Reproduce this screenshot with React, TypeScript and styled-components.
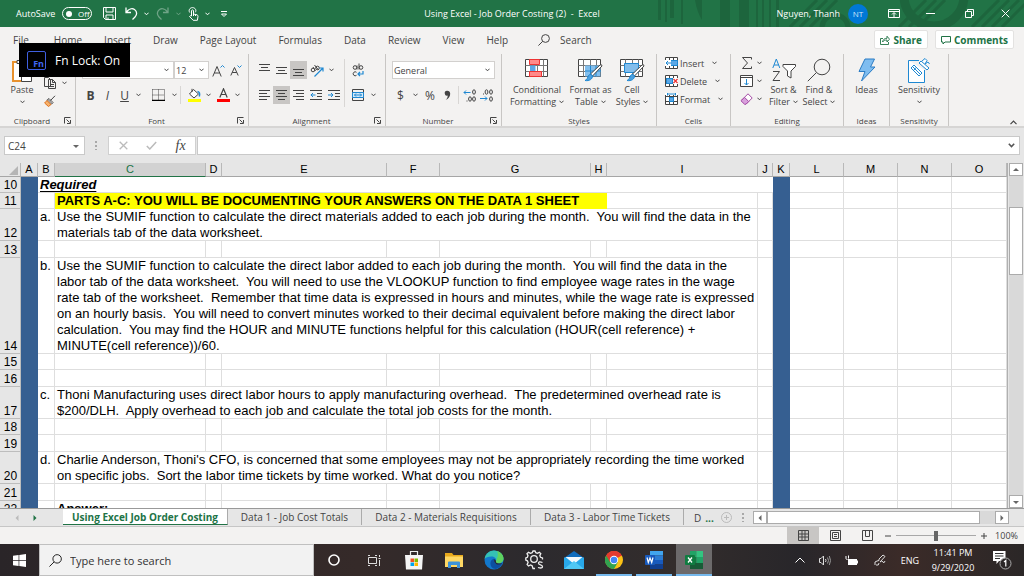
import React from 'react';
import styled, { createGlobalStyle, css } from 'styled-components';

const GREEN = '#217346';
const INK = '#444444';
const BLUE = '#1e88d2';

const Global = createGlobalStyle`
  * { box-sizing: border-box; }
  body { margin: 0; font-family: "Open Sans", "Noto Sans", sans-serif; font-size: 10px; color: ${INK}; }
  button, input, select { font: inherit; color: inherit; margin: 0; padding: 0; border: 0; background: none; border-radius: 0; }
  button { display: flex; align-items: center; justify-content: center; white-space: nowrap; }
  svg { display: block; flex: none; }
`;

const Shell = styled.div`
  display: flex;
  flex-direction: column;
  height: 100vh;
  overflow: hidden;
  background: #f3f2f1;
`;

/* ---------- shared pieces ---------- */

const Glyph = ({ w, h, box, children }: { w: number; h: number; box?: string; children: React.ReactNode }) => (
  <svg width={w} height={h} viewBox={box || `0 0 ${w} ${h}`} fill="none" stroke={INK} strokeWidth="1" aria-hidden="true">
    {children}
  </svg>
);

const Chevron = ({ color = INK }: { color?: string }) => (
  <svg width="5" height="4" viewBox="0 0 5 4" fill="none" stroke={color} aria-hidden="true">
    <path d="M.4.7 2.5 2.8 4.6.7" />
  </svg>
);

const Triangle = ({ dir, color = '#666' }: { dir: 'up' | 'down' | 'left' | 'right'; color?: string }) => {
  const d = { up: 'M1 5 4 2 7 5z', down: 'M1 3 4 6 7 3z', left: 'M5.500 1 2.500 4 5.500 7z', right: 'M2.500 1 5.500 4 2.500 7z' }[dir];
  return (
    <svg width="8" height="8" viewBox="0 0 8 8" fill={color} aria-hidden="true">
      <path d={d} />
    </svg>
  );
};

/* ---------- title bar ---------- */

const TitleBar = styled.header`
  position: relative;
  display: grid;
  grid-template-columns: 1fr auto 1fr;
  align-items: center;
  flex: none;
  height: 27px;
  background: ${GREEN};
  color: #fff;
`;
const Pattern = styled.svg`
  position: absolute;
  top: 0;
  right: 0;
`;
const TitleSide = styled.div<{ $end?: boolean }>`
  position: relative;
  display: flex;
  align-items: center;
  height: 27px;
  ${(p) => (p.$end ? 'justify-content: flex-end;' : 'padding-left: 16px;')}
`;
const Title = styled.h1`
  position: relative;
  margin: 0;
  font-size: 9px;
  font-weight: 400;
  white-space: pre;
`;
const AutoSave = styled.label`
  display: flex;
  align-items: center;
  gap: 3px;
  width: 81px;
  font-size: 9px;
`;
const Pill = styled.span`
  display: flex;
  align-items: center;
  gap: 6px;
  width: 30px;
  height: 13px;
  margin-left: auto;
  margin-right: 5px;
  padding-left: 3px;
  border: 1px solid #fff;
  border-radius: 7px;
  font-size: 8px;
  line-height: 8px;
`;
const Knob = styled.input`
  appearance: none;
  width: 6px;
  height: 6px;
  border-radius: 50%;
  background: #fff;
`;
const BarButton = styled.button<{ $w: number; $dim?: boolean }>`
  width: ${(p) => p.$w}px;
  height: 27px;
  opacity: ${(p) => (p.$dim ? 0.35 : 1)};
`;
const UserName = styled.span`
  margin-right: 8px;
  font-size: 9px;
`;
const Avatar = styled.span`
  display: grid;
  place-items: center;
  width: 20px;
  height: 20px;
  margin-right: 10px;
  border-radius: 50%;
  background: #0078d7;
  font-size: 8px;
  color: #cfe6fa;
`;

/* ---------- ribbon tabs ---------- */

const TabRow = styled.nav`
  display: flex;
  align-items: center;
  flex: none;
  height: 25px;
  padding: 0 10px 0 13px;
  gap: 22px;
`;
const RibbonTab = styled.button`
  height: 25px;
  font-size: 10px;
  &:first-child { margin-right: 3px; }
`;
const SearchBox = styled.label`
  display: flex;
  align-items: center;
  gap: 10px;
  margin: 0 auto 0 8px;
  input { width: 80px; }
  input::placeholder { color: ${INK}; opacity: 1; }
`;
const TabActions = styled.div`
  display: flex;
  gap: 7px;
`;
const ActionButton = styled.button`
  gap: 3px;
  height: 19px;
  padding: 0 5px;
  border: 1px solid #e3e2e1;
  border-radius: 2px;
  background: #fff;
  color: ${GREEN};
  font-size: 10px;
  font-weight: 700;
`;

/* ---------- ribbon ---------- */

const Ribbon = styled.section`
  display: flex;
  flex: none;
  height: 76px;
  padding-top: 2px;
  border-bottom: 2px solid #d6d5d4;
`;
const GroupBox = styled.div<{ $w: number }>`
  display: flex;
  flex-direction: column;
  flex: none;
  width: ${(p) => p.$w}px;
  height: 72px;
  border-right: 1px solid #c8c6c4;
`;
const GroupBody = styled.div`
  display: flex;
  flex: 1;
  min-height: 0;
`;
const GroupFoot = styled.div<{ $launch?: boolean }>`
  display: grid;
  grid-template-columns: ${(p) => (p.$launch ? '1fr 8px' : '1fr')};
  align-items: center;
  height: 12px;
  padding-right: ${(p) => (p.$launch ? 3 : 0)}px;
  font-size: 8px;
  text-align: center;
  white-space: nowrap;
`;
const Column = styled.div<{ $pad?: number; $gap?: number; $top?: number }>`
  display: flex;
  flex-direction: column;
  padding-left: ${(p) => p.$pad || 0}px;
  padding-top: ${(p) => p.$top || 0}px;
  gap: ${(p) => p.$gap || 0}px;
`;
const ToolRow = styled.div`
  display: flex;
  align-items: center;
  height: 18px;
`;
const Tool = styled.button<{ $w: number; $on?: boolean }>`
  flex: none;
  width: ${(p) => p.$w}px;
  height: 18px;
  font-size: 12px;
  ${(p) => p.$on && css`background: #c8c6c4;`}
`;
const Rule = styled.span<{ $h?: number; $m?: number }>`
  flex: none;
  width: 1px;
  height: ${(p) => p.$h || 18}px;
  margin: 0 ${(p) => p.$m || 2}px;
  background: #d8d6d4;
`;
const Combo = styled.label<{ $w: number }>`
  display: flex;
  align-items: center;
  flex: none;
  width: ${(p) => p.$w}px;
  height: 18px;
  padding: 0 4px 0 1px;
  border: 1px solid #d2d0ce;
  background: #fff;
  font-size: 9px;
  select { flex: 1; min-width: 0; appearance: none; }
`;
const BigButton = styled.button<{ $w: number }>`
  flex-direction: column;
  justify-content: flex-start;
  flex: none;
  width: ${(p) => p.$w}px;
  padding-top: 3px;
  font-size: 9px;
  line-height: 12px;
`;
const IconSlot = styled.span`
  display: grid;
  place-items: center;
  height: 26px;
  margin-bottom: 1px;
`;
const WithChevron = styled.span`
  display: flex;
  align-items: center;
  gap: 3px;
  min-height: 12px;
`;
const ListButton = styled.button`
  justify-content: flex-start;
  gap: 2px;
  height: 18px;
  font-size: 9px;
  svg:last-child { margin-left: 6px; }
`;
const Collapse = styled.button`
  align-self: flex-end;
  margin: 0 7px 1px auto;
`;
const Toast = styled.div`
  position: absolute;
  top: 43px;
  left: 19px;
  display: flex;
  align-items: center;
  gap: 9px;
  width: 111px;
  height: 34px;
  padding-left: 8px;
  background: #000;
  color: #fff;
  font-size: 12px;
  white-space: nowrap;
`;
const FnKey = styled.span`
  display: flex;
  align-items: flex-end;
  justify-content: flex-end;
  width: 19px;
  height: 19px;
  padding: 0 1px 1px 0;
  border: 1px solid #3f5fe0;
  border-radius: 2px;
  color: #3f66f0;
  font-size: 9px;
  font-weight: 700;
  line-height: 9px;
`;

const Group = ({ name, w, launch, children }: { name: string; w: number; launch?: boolean; children: React.ReactNode }) => (
  <GroupBox $w={w}>
    <GroupBody>{children}</GroupBody>
    <GroupFoot $launch={launch}>
      <span>{name}</span>
      {launch && (
        <Glyph w={7} h={7}><path d="M.5 6.500V.5h6M2.500 2.500l3 3M6.500 3v3.500H3" /></Glyph>
      )}
    </GroupFoot>
  </GroupBox>
);

/* ---------- formula bar ---------- */

const FormulaBar = styled.section`
  display: flex;
  align-items: center;
  flex: none;
  height: 35px;
  padding: 0 4px;
  background: #e6e6e6;
`;
const NameBox = styled.label`
  display: flex;
  align-items: center;
  width: 81px;
  height: 19px;
  padding: 0 4px 0 3px;
  border: 1px solid #c9c9c9;
  background: #fff;
  input { flex: 1; min-width: 0; font-size: 10px; }
`;
const Dots = styled.span<{ $tight?: boolean }>`
  width: 2px;
  height: 9px;
  margin: ${(p) => (p.$tight ? '0 9px 0 6px' : '0 11px 0 10px')};
  background: repeating-linear-gradient(#a8a8a8 0 2px, transparent 2px 4px);
`;
const FxBox = styled.div`
  display: flex;
  align-items: center;
  justify-content: space-around;
  width: 88px;
  height: 19px;
  margin-right: 1px;
  border: 1px solid #d0d0d0;
  background: #fff;
`;
const FxButton = styled.button`
  width: 24px;
  font: italic 400 14px/16px "Liberation Serif", serif;
  color: #444;
`;
const FormulaField = styled.label`
  display: flex;
  align-items: center;
  flex: 1;
  height: 19px;
  padding: 0 4px;
  border: 1px solid #c9c9c9;
  background: #fff;
  input { flex: 1; min-width: 0; }
`;

/* ---------- worksheet ---------- */

const SheetArea = styled.main`
  display: flex;
  flex: 1;
  min-height: 0;
  background: #e6e6e6;
`;
const SheetView = styled.div`
  flex: 1;
  overflow: hidden;
  margin-right: 1px;
  border-right: 1px solid #b0b0b0;
  background: #fff;
`;
const Grid = styled.table`
  width: 100%;
  table-layout: fixed;
  border-collapse: separate;
  border-spacing: 0;
  font-family: "Liberation Sans", Arial, sans-serif;
  font-size: 13px;
  line-height: 16px;
  color: #000;
`;
const ColHead = styled.th<{ $on?: boolean }>`
  height: 14px;
  padding: 0;
  border-bottom: 1px solid #a6a6a6;
  border-right: 1px solid #b8b8b8;
  background: #e6e6e6;
  font-size: 11px;
  font-weight: 400;
  line-height: 13px;
  ${(p) => p.$on && css`background: #d2d2d2; border-bottom-color: ${GREEN}; color: ${GREEN};`}
`;
const RowHead = styled.th`
  padding: 0;
  background: #e6e6e6;
  box-shadow: inset -1px -1px #bdbdbd;
  font-size: 12px;
  font-weight: 400;
  line-height: 15px;
  vertical-align: bottom;
`;
const Row = styled.tr<{ $h: number }>`
  height: ${(p) => p.$h}px;
`;
const Cell = styled.td<{ $fill?: string; $plain?: boolean; $bold?: boolean }>`
  padding: 0 0 0 2px;
  vertical-align: top;
  white-space: pre;
  background: ${(p) => p.$fill || '#fff'};
  ${(p) => !p.$fill && css`box-shadow: inset -1px -1px #dedede;`}
  ${(p) => p.$plain && css`box-shadow: inset 0 -1px #dedede;`}
  ${(p) => p.$bold && css`font-weight: 700;`}
`;
const Required = styled.span`
  font-style: italic;
  font-weight: 700;
  text-decoration: underline 1px;
  text-decoration-skip-ink: none;
  text-underline-offset: 2px;
`;
const VScroll = styled.div`
  display: flex;
  flex-direction: column;
  width: 14px;
  margin-right: 1px;
  background: #d9d9d9;
`;
const ScrollButton = styled.button`
  width: 14px;
  height: 13px;
  border: 1px solid #ababab;
  background: #fff;
`;
const VThumb = styled.div`
  height: 68px;
  margin: 31px 0 auto;
  border: 1px solid #ababab;
  background: #fff;
`;

type RowData = { n: number; h: number; kind?: 'title' | 'banner' | 'text' | 'answer'; mark?: string; text?: string };

const rows: RowData[] = [
  { n: 10, h: 16, kind: 'title', text: 'Required' },
  { n: 11, h: 16, kind: 'banner', text: 'PARTS A-C: YOU WILL BE DOCUMENTING YOUR ANSWERS ON THE DATA 1 SHEET' },
  {
    n: 12, h: 32, kind: 'text', mark: 'a.',
    text: 'Use the SUMIF function to calculate the direct materials added to each job during the month.  You will find the data in the\nmaterials tab of the data worksheet.',
  },
  { n: 13, h: 17 },
  {
    n: 14, h: 96, kind: 'text', mark: 'b.',
    text: 'Use the SUMIF function to calculate the direct labor added to each job during the month.  You will find the data in the\nlabor tab of the data worksheet.  You will need to use the VLOOKUP function to find employee wage rates in the wage\nrate tab of the worksheet.  Remember that time data is expressed in hours and minutes, while the wage rate is expressed\non an hourly basis.  You will need to convert minutes worked to their decimal equivalent before making the direct labor\ncalculation.  You may find the HOUR and MINUTE functions helpful for this calculation (HOUR(cell reference) +\nMINUTE(cell reference))/60.',
  },
  { n: 15, h: 16 },
  { n: 16, h: 17 },
  {
    n: 17, h: 32, kind: 'text', mark: 'c.',
    text: 'Thoni Manufacturing uses direct labor hours to apply manufacturing overhead.  The predetermined overhead rate is\n$200/DLH.  Apply overhead to each job and calculate the total job costs for the month.',
  },
  { n: 18, h: 16 },
  { n: 19, h: 17 },
  {
    n: 20, h: 32, kind: 'text', mark: 'd.',
    text: "Charlie Anderson, Thoni's CFO, is concerned that some employees may not be appropriately recording the time worked\non specific jobs.  Sort the labor time tickets by time worked. What do you notice?",
  },
  { n: 21, h: 17 },
  { n: 22, h: 16, kind: 'answer', text: 'Answer:' },
];

const columns: [string, number][] = [
  ['A', 17], ['B', 17], ['C', 151], ['D', 16], ['E', 165], ['F', 53], ['G', 151], ['H', 16],
  ['I', 151], ['J', 15], ['K', 17], ['L', 54], ['M', 54], ['N', 54], ['O', 0],
];
const BAND = '#365f91';

const blanks = (n: number) => Array.from({ length: n }, (_, i) => <Cell key={`x${i}`} />);

const SheetRow = ({ row }: { row: RowData }) => (
  <Row $h={row.h}>
    <RowHead scope="row">{row.n}</RowHead>
    <Cell $fill={BAND} />
    {row.kind === 'title' && <Cell $plain colSpan={9}><Required>{row.text}</Required></Cell>}
    {row.kind === 'banner' && (
      <>
        <Cell />
        <Cell $fill="#ffff00" $bold colSpan={6}>{row.text}</Cell>
        {blanks(2)}
      </>
    )}
    {row.kind === 'text' && (
      <>
        <Cell>{row.mark}</Cell>
        <Cell colSpan={7}>{row.text}</Cell>
        <Cell />
      </>
    )}
    {row.kind === 'answer' && (
      <>
        <Cell />
        <Cell $bold>{row.text}</Cell>
        {blanks(7)}
      </>
    )}
    {!row.kind && blanks(9)}
    <Cell $fill={BAND} />
    {blanks(4)}
  </Row>
);

/* ---------- sheet tabs and status bar ---------- */

const SheetTabs = styled.nav`
  display: flex;
  align-items: stretch;
  flex: none;
  height: 19px;
  border-top: 1px solid #999;
  border-bottom: 1px solid #c6c6c6;
  background: #e6e6e6;
`;
const TabNav = styled.div`
  display: flex;
  align-items: center;
  gap: 10px;
  width: 63px;
  padding-left: 13px;
`;
const SheetTab = styled.button<{ $w: number; $on?: boolean }>`
  flex: none;
  width: ${(p) => p.$w}px;
  height: 16px;
  border-right: 1px solid #ababab;
  ${(p) => p.$on && css`
    border-bottom: 1px solid ${GREEN};
    background: #fff;
    color: ${GREEN};
    font-weight: 700;
  `}
`;
const MoreTabs = styled.div`
  display: flex;
  align-items: center;
  gap: 4px;
  padding-left: 10px;
  b { color: ${GREEN}; }
  button { margin-left: 3px; }
`;
const HScroll = styled.div`
  display: flex;
  flex: 1;
  height: 13px;
  margin: 2px 15px 0 0;
  background: #d9d9d9;
`;
const HThumb = styled.div`
  flex: 1;
  margin-right: 15px;
  border: 1px solid #ababab;
  background: #fff;
`;
const StatusBar = styled.footer`
  display: flex;
  align-items: center;
  justify-content: flex-end;
  flex: none;
  height: 17px;
  padding-right: 6px;
  font-size: 9px;
`;
const ViewButton = styled.button<{ $on?: boolean }>`
  width: 32px;
  height: 17px;
  ${(p) => p.$on && css`background: #c8c6c4;`}
`;
const ZoomRange = styled.input`
  appearance: none;
  width: 80px;
  height: 10px;
  margin: 0 3px;
  background: linear-gradient(#a8a8a8, #a8a8a8) center / 100% 1px no-repeat;
  &::-webkit-slider-thumb { appearance: none; width: 4px; height: 10px; background: #666; }
`;
const ZoomStep = styled.button`
  width: 10px;
  height: 12px;
`;
const ZoomValue = styled.span`
  width: 29px;
  text-align: right;
`;

/* ---------- taskbar ---------- */

const Taskbar = styled.footer`
  display: flex;
  flex: none;
  height: 32px;
  background: linear-gradient(90deg, #2a2528, #352a29 35%, #2c2a2e 52%, #332d2c 66%, #28262a 78%, #3b2b28 88%, #2b2727);
  color: #fff;
`;
const StartButton = styled.button`
  width: 39px;
`;
const TaskSearch = styled.label`
  display: flex;
  align-items: center;
  flex: none;
  gap: 8px;
  width: 275px;
  padding-left: 9px;
  border: 1px solid #c0c0c0;
  background: #f2f2f2;
  color: #333;
  font-size: 11px;
  input { flex: 1; min-width: 0; }
  input::placeholder { color: #333; opacity: 1; }
`;
const TaskButton = styled.button<{ $open?: boolean; $active?: boolean }>`
  flex: none;
  width: 36px;
  margin: 0 2px;
  ${(p) => p.$open && css`box-shadow: inset 0 -2px #76b9ed;`}
  ${(p) => p.$active && css`background: #6c6a6b;`}
`;
const Tray = styled.div`
  display: flex;
  align-items: center;
  margin-left: auto;
`;
const TrayButton = styled.button<{ $w: number }>`
  width: ${(p) => p.$w}px;
  height: 32px;
  font-size: 9px;
`;
const Clock = styled.time`
  width: 56px;
  font-size: 9px;
  line-height: 15px;
  text-align: center;
  white-space: pre;
`;

/* ---------- drawings ---------- */

const Lens = ({ s = 12, color = INK }: { s?: number; color?: string }) => (
  <svg width={s} height={s} viewBox="0 0 12 12" fill="none" stroke={color} strokeWidth={12 / s} aria-hidden="true">
    <circle cx="7.500" cy="4.500" r="3.900" /><path d="M4.700 7.300.4 11.600" />
  </svg>
);

const Lines = ({ ends }: { ends: [number, number][] }) => (
  <Glyph w={11} h={12}>
    {ends.map(([a, b], i) => <path key={i} d={`M${a} ${1.5 + i * 3}H${b}`} />)}
  </Glyph>
);

const MiniGrid = ({ children }: { children: React.ReactNode }) => (
  <Glyph w={13} h={12}>
    <path fill="#fff" d="M.5.5h12v11H.5z" /><path d="M.5 3.500h12M.5 8.500h12M4.500.5v11M8.500.5v11" />
    {children}
  </Glyph>
);

const BigGrid = ({ children }: { children: React.ReactNode }) => (
  <Glyph w={25} h={23}>
    <path fill="#fff" d="M.5.5h22v17H.5z" /><path d="M.5 6.500h22M.5 12.500h22M5.500.5v17M12.500.5v17M18.500.5v17" stroke="#777" />
    {children}
  </Glyph>
);

const Brush = () => (
  <>
    <path d="M24 7 14.500 17l-2-2L22 6q2-1 2 1z" fill="#fff" />
    <path d="M14.500 17c0 3-3 5.300-7.500 4.500 2.500-1 2.500-3 3.500-5 1.200-1.600 3-1.500 4 .5z" fill="#4ba0e0" stroke={BLUE} />
  </>
);

const TitlePattern = () => (
  <Pattern width="370" height="27" viewBox="0 0 370 27" aria-hidden="true">
    <g fill="#1d653d">
      <path d="M4 0h3v20H4zM11 0h2v22h-2zM16 0h4v18h-4zM27 0h2v24h-2zM48 0v20q-5-8-7-20zM66 0h10v27H66zM85 0h10v27H85zM102 0h2v27h-2zM108 0h2v27h-2z" />
      <path d="M115 0h2v27h-2zM122 0h3v27h-3z" />
    </g>
    <g fill="none" stroke="#1d653d">
      <path d="M136 27 163 0M146 27 173 0M156 27 183 0M245 27 272 0M255 27 282 0M264 27 291 0M318 27 345 0M328 27 355 0M338 27 365 0M348 27 374 1" strokeWidth="3" />
      <circle cx="181" cy="28" r="13" strokeWidth="5" /><circle cx="280" cy="-4" r="30" strokeWidth="9" />
    </g>
  </Pattern>
);

/* ---------- page ---------- */

export default function App() {
  return (
    <Shell>
      <Global />
      <TitleBar>
        <TitlePattern />
        <TitleSide>
          <AutoSave>AutoSave<Pill><Knob type="checkbox" />Off</Pill></AutoSave>
          <BarButton $w={24} aria-label="Save">
            <svg width="13" height="13" viewBox="0 0 13 13" fill="none" stroke="#fff"><path d="M.5.5h12v12h-10l-2-2zM3 .5v4.500h7V.5M3 12.500V8h7v4.500M5 10.500v2" /></svg>
          </BarButton>
          <BarButton $w={20} aria-label="Undo">
            <svg width="13" height="13" viewBox="0 0 13 13" fill="none" stroke="#fff" strokeWidth="1.300"><path d="M1 .5v5h5M1.200 5.300C3.500 2 7 .8 9.500 2.500c3 2 2.500 5.500.5 7.500l-2.500 2.500" /></svg>
          </BarButton>
          <BarButton $w={10} aria-label="Undo list"><Chevron color="#fff" /></BarButton>
          <BarButton $w={22} $dim aria-label="Redo">
            <svg width="13" height="13" viewBox="0 0 13 13" fill="none" stroke="#fff" strokeWidth="1.300"><path d="M12 .5v5H7M11.800 5.300C9.500 2 6 .8 3.500 2.500c-3 2-2.500 5.500-.5 7.500l2.500 2.500" /></svg>
          </BarButton>
          <BarButton $w={10} $dim aria-label="Redo list"><Chevron color="#fff" /></BarButton>
          <BarButton $w={20} aria-label="Touch mode">
            <svg width="11" height="14" viewBox="0 0 11 14" fill="none" stroke="#fff"><path d="M3.500 9V3.500q1-1.200 2 0V7l3.500.8q1 .4 1 1.500l-.6 4H5.200L1.500 9.500q.6-1.200 2-.5M5.500 9V7M7.500 9V7.500" /><path d="M1.700 5.500C.2 3 2 .6 4.500.6S8.800 3 7.300 5.300" /></svg>
          </BarButton>
          <BarButton $w={8} aria-label="Touch list"><Chevron color="#fff" /></BarButton>
          <BarButton $w={26} aria-label="Customize">
            <svg width="8" height="8" viewBox="0 0 8 8" fill="none" stroke="#fff"><path d="M1 1.500h6M1.500 4 4 6.500 6.500 4z" /></svg>
          </BarButton>
        </TitleSide>
        <Title>{'Using Excel - Job Order Costing (2)  -  Excel'}</Title>
        <TitleSide $end>
          <UserName>Nguyen, Thanh</UserName>
          <Avatar>NT</Avatar>
          <BarButton $w={32} aria-label="Ribbon display">
            <svg width="12" height="9" viewBox="0 0 12 9" fill="none" stroke="#fff"><path d="M.5.5h11v8H.5zM.5 2.500h11M6 8V4M4 5.500l2-2 2 2" /></svg>
          </BarButton>
          <BarButton $w={41} aria-label="Minimize">
            <svg width="9" height="9" viewBox="0 0 9 9" stroke="#fff"><path d="M0 4.500h9" /></svg>
          </BarButton>
          <BarButton $w={36} aria-label="Restore">
            <svg width="9" height="9" viewBox="0 0 9 9" fill="none" stroke="#fff"><path d="M.5 2.500h6v6h-6zM2.500 2V.5h6v6H7" /></svg>
          </BarButton>
          <BarButton $w={37} aria-label="Close">
            <svg width="9" height="9" viewBox="0 0 9 9" stroke="#fff"><path d="m.7.7 7.600 7.600M8.300.7.7 8.300" /></svg>
          </BarButton>
        </TitleSide>
      </TitleBar>

      <TabRow>
        {['File', 'Home', 'Insert', 'Draw', 'Page Layout', 'Formulas', 'Data', 'Review', 'View', 'Help'].map((t) => (
          <RibbonTab key={t}>{t}</RibbonTab>
        ))}
        <SearchBox><Lens /><input placeholder="Search" aria-label="Search" /></SearchBox>
        <TabActions>
          <ActionButton>
            <svg width="10" height="10" viewBox="0 0 10 10" fill="none" stroke={GREEN} strokeWidth=".9"><path d="M3 3.500H.5v6h8V7M2.500 7c.5-2.500 2-3.700 4.500-3.700V1.200l2.500 3L7 7V5C5 5 3.600 5.600 2.500 7z" /></svg>
            Share
          </ActionButton>
          <ActionButton>
            <svg width="10" height="10" viewBox="0 0 10 10" fill="none" stroke={GREEN}><path d="M.5 1.500h9v5.500H4L2 9V7H.5z" /></svg>
            Comments
          </ActionButton>
        </TabActions>
      </TabRow>

      <Ribbon>
        <Group name="Clipboard" w={76} launch>
          <BigButton $w={44}>
            <IconSlot>
              <Glyph w={20} h={23}><path d="M1 3h16v19H1z" stroke="#e8912d" strokeWidth="2" fill="#fff" /><path d="M5 1.500h8v3H5zM9.500 9.500h10v13h-10z" fill="#fff" /></Glyph>
            </IconSlot>
            Paste
            <WithChevron><Chevron /></WithChevron>
          </BigButton>
          <Column $top={20}>
            <ToolRow>
              <Tool $w={12} aria-label="Copy"><Glyph w={12} h={12}><path d="M.5.5h4l2 2v7h-6zM4.500 2.500h4l3 3v6h-7zM8.500 2.500v3h3M6 7.500h4M6 9.500h4" fill="#f3f2f1" /></Glyph></Tool>
              <Tool $w={16} aria-label="Copy list"><Chevron /></Tool>
            </ToolRow>
            <Tool $w={12} aria-label="Format painter">
              <Glyph w={12} h={12}><path d="M11 .8 6.500 5.500M4 4.500l4 4M5 3.500l4 4L7 9.500 2.800 5.500z" fill="#fff" /><path d="M3 5.500 7 9.500 4.500 11.500.6 8z" stroke="#e0701c" fill="#f6b26b" /></Glyph>
            </Tool>
          </Column>
        </Group>

        <Group name="Font" w={173} launch>
          <Column $pad={6} $top={7} $gap={7}>
            <ToolRow>
              <Combo $w={92}><select aria-label="Font name"><option> </option></select><Chevron /></Combo>
              <Combo $w={35}><select aria-label="Font size"><option>12</option></select><Chevron /></Combo>
              <Tool $w={18} aria-label="Grow font"><Glyph w={13} h={13}><path d="M.8 12.500 5 2.500l4.200 10M2.300 9h5.400" /><path d="M8.500 3.500 10.500 1.500l2 2" stroke={BLUE} /></Glyph></Tool>
              <Tool $w={18} aria-label="Shrink font"><Glyph w={12} h={12}><path d="M.8 11.500 4.500 3.500l3.700 8M2.200 8.500h4.600" /><path d="M7.500 1.500l2 2 2-2" stroke={BLUE} /></Glyph></Tool>
            </ToolRow>
            <ToolRow>
              <Tool $w={17}><b>B</b></Tool>
              <Tool $w={17}><i>I</i></Tool>
              <Tool $w={17}><u>U</u></Tool>
              <Tool $w={11} aria-label="Underline list"><Chevron /></Tool>
              <Tool $w={29} aria-label="Borders"><Glyph w={13} h={12}><path d="M.5.5h12M.5.5v11M12.500.5v11M6.500.5v11M.5 6h12" strokeDasharray="1 1" /><path d="M0 11.500h13" strokeWidth="1.500" stroke="#000" /></Glyph></Tool>
              <Tool $w={3} aria-label="Borders list"><Chevron /></Tool>
              <Rule $m={4} />
              <Tool $w={18} aria-label="Fill color"><Glyph w={13} h={14}><path d="M5.500 1.500l5 4.500-4.500 4L1.500 6zM4 4V.8" fill="#fff" /><path d="M9.500 3.500q3 .5 1.800 5" stroke={BLUE} strokeWidth="1.500" /><path d="M0 11h13v3H0z" fill="#ffff00" stroke="none" /></Glyph></Tool>
              <Tool $w={11} aria-label="Fill list"><Chevron /></Tool>
              <Tool $w={18} aria-label="Font color"><Glyph w={13} h={14}><path d="M2.800 9.500 6.500.8l3.700 8.700M4 6.500h5" strokeWidth="1.200" /><path d="M0 11h13v3H0z" fill="#ff0000" stroke="none" /></Glyph></Tool>
              <Tool $w={11} aria-label="Font color list"><Chevron /></Tool>
            </ToolRow>
          </Column>
        </Group>

        <Group name="Alignment" w={137} launch>
          <Column $pad={7} $top={7} $gap={7}>
            <ToolRow>
              <Tool $w={17} aria-label="Top align"><Glyph w={11} h={12}><path d="M0 .5h11M2 3.500h7M0 6.500h11" /></Glyph></Tool>
              <Tool $w={17} aria-label="Middle align"><Glyph w={11} h={12}><path d="M0 3.500h11M2 6.500h7M0 9.500h11" /></Glyph></Tool>
              <Tool $w={17} $on aria-label="Bottom align"><Glyph w={11} h={12}><path d="M0 5.500h11M2 8.500h7M0 11.500h11" /></Glyph></Tool>
              <Tool $w={19} aria-label="Orientation"><Glyph w={14} h={13}><circle cx="3" cy="6" r="1.800" /><path d="M3 3l2.500 4M4.500 1l4 5" /><circle cx="7.500" cy="4" r="1.800" /><path d="M4.500 12.500 13 4M9.500 4H13v3.500" stroke={BLUE} strokeWidth="1.200" /></Glyph></Tool>
              <Tool $w={10} aria-label="Orientation list"><Chevron /></Tool>
            </ToolRow>
            <ToolRow>
              <Tool $w={17} aria-label="Align left"><Lines ends={[[0, 11], [0, 8], [0, 11], [0, 8]]} /></Tool>
              <Tool $w={17} $on aria-label="Center"><Lines ends={[[0, 11], [2, 9], [0, 11], [2, 9]]} /></Tool>
              <Tool $w={17} aria-label="Align right"><Lines ends={[[0, 11], [3, 11], [0, 11], [3, 11]]} /></Tool>
              <Tool $w={18} aria-label="Decrease indent"><Glyph w={12} h={12}><path d="M0 1.500h12M7 4.500h5M7 7.500h5M0 10.500h12" /><path d="M5.500 6H.8M3 4 1 6l2 2" stroke={BLUE} /></Glyph></Tool>
              <Tool $w={17} aria-label="Increase indent"><Glyph w={12} h={12}><path d="M0 1.500h12M7 4.500h5M7 7.500h5M0 10.500h12" /><path d="M0 6h4.700M3 4l2 2-2 2" stroke={BLUE} /></Glyph></Tool>
            </ToolRow>
          </Column>
          <Column $top={5}><Rule $h={48} /></Column>
          <Column $top={7} $gap={7}>
            <Tool $w={22} aria-label="Wrap text"><Glyph w={12} h={14}><circle cx="3" cy="4.500" r="1.800" /><path d="M5 2.500v4M7 .5v6" /><circle cx="9" cy="4.500" r="1.800" /><path d="M4.500 9.300a2 2 0 1 0 0 3" /><path d="M11 8v3H6M8 9l-2 2 2 2" stroke={BLUE} strokeWidth="1.200" /></Glyph></Tool>
            <ToolRow>
              <Tool $w={22} aria-label="Merge and center"><Glyph w={12} h={12}><path d="M.5.5h11v11H.5z" /><path d="M.5 3.500h11v5H.5z" fill="#d6eaf8" stroke={BLUE} /><path d="M2.500 6h7M4 4.500 2.500 6 4 7.500M8 4.500 9.500 6 8 7.500" stroke={BLUE} /></Glyph></Tool>
              <Tool $w={8} aria-label="Merge list"><Chevron /></Tool>
            </ToolRow>
          </Column>
        </Group>

        <Group name="Number" w={116} launch>
          <Column $pad={6} $top={7} $gap={7}>
            <Combo $w={103}><select aria-label="Number format"><option>General</option></select><Chevron /></Combo>
            <ToolRow>
              <Tool $w={17}>$</Tool>
              <Tool $w={12} aria-label="Currency list"><Chevron /></Tool>
              <Tool $w={18}>%</Tool>
              <Tool $w={16} aria-label="Comma style"><Glyph w={7} h={11}><path d="M3.200.8a2.400 2.400 0 1 0 .6 4.700C3.600 7.500 2.800 9 1.500 10 4.500 9 6.200 6.500 6.200 3.800 6.200 2 5 .8 3.200.8z" fill={INK} stroke="none" /></Glyph></Tool>
              <Rule $m={3} />
              <Tool $w={14} aria-label="Increase decimal"><Glyph w={13} h={13}><ellipse cx="11" cy="3" rx="1.400" ry="2.200" /><ellipse cx="7" cy="10" rx="1.400" ry="2.200" /><ellipse cx="11" cy="10" rx="1.400" ry="2.200" /><path d="M3.500 12h1" /><path d="M7.500 3.500H1M3 1.500l-2 2 2 2" stroke={BLUE} /></Glyph></Tool>
              <Tool $w={20} aria-label="Decrease decimal"><Glyph w={13} h={13}><ellipse cx="6.500" cy="3" rx="1.400" ry="2.200" /><ellipse cx="11" cy="3" rx="1.400" ry="2.200" /><ellipse cx="11" cy="10" rx="1.400" ry="2.200" /><path d="M3 5h1" /><path d="M0 9.500h7M5 7.500l2 2-2 2" stroke={BLUE} /></Glyph></Tool>
            </ToolRow>
          </Column>
        </Group>

        <Group name="Styles" w={155}>
          <Column $pad={5} />
          <BigButton $w={60}>
            <IconSlot>
              <BigGrid>
                <path d="M4.500.5h10v5h-10zM4.500 12.500h12v5h-12z" fill="#ff8a8a" stroke="#e33" /><path d="M5 6.500h5.500v5.500H5z" fill="#5ba7e6" stroke="none" />
              </BigGrid>
            </IconSlot>
            Conditional
            <WithChevron>Formatting<Chevron /></WithChevron>
          </BigButton>
          <BigButton $w={47}>
            <IconSlot><BigGrid><path d="M7 6.500h15.500v11H7z" fill="#83beec" stroke="none" /><path d="M7 12h16M12.500 6.500v11M18 6.500v11" stroke={BLUE} /><Brush /></BigGrid></IconSlot>
            Format as
            <WithChevron>Table<Chevron /></WithChevron>
          </BigButton>
          <BigButton $w={36}>
            <IconSlot><BigGrid><path d="M4.500 4.500h14v9h-14z" fill="#83beec" stroke={BLUE} /><Brush /></BigGrid></IconSlot>
            Cell
            <WithChevron>Styles<Chevron /></WithChevron>
          </BigButton>
        </Group>

        <Group name="Cells" w={74}>
          <Column $pad={8}>
            <ListButton><MiniGrid><path d="M5 3.500h7.500v5H5z" fill="#5ba7e6" stroke={BLUE} /><path d="M0 3h6v6H0z" fill="#fff" stroke="none" /><path d="M6.500 6H1M3 4 1 6l2 2" stroke={BLUE} /></MiniGrid>Insert<Chevron /></ListButton>
            <ListButton><MiniGrid><path d="M1.500 3.500h6v5h-6z" fill="#5ba7e6" stroke={BLUE} /><path d="M8 3h5v6H8z" fill="#fff" stroke="none" /><path d="M8.500 4l4 4M12.500 4l-4 4" stroke="#e33" strokeWidth="1.300" /></MiniGrid>Delete<Chevron /></ListButton>
            <ListButton><MiniGrid><path d="M4.500 4.500h4v4h-4z" fill="#5ba7e6" stroke={BLUE} /><path d="M0 0h13v2H0z" fill="#fff" stroke="none" /><path d="M2.500 1h8M2.500 0v2.500M10.500 0v2.500" stroke={BLUE} /></MiniGrid>Format<Chevron /></ListButton>
          </Column>
        </Group>

        <Group name="Editing" w={113}>
          <Column $pad={7}>
            <ToolRow><Tool $w={17} aria-label="Sum"><Glyph w={10} h={12}><path d="M9.500 2.500v-2h-9l5 5.500-5 5.500h9v-2" /></Glyph></Tool><Tool $w={9} aria-label="Sum list"><Chevron /></Tool></ToolRow>
            <ToolRow><Tool $w={17} aria-label="Fill"><Glyph w={13} h={12}><path d="M.5.5h12v11H.5zM.5 2.500h12" fill="#fff" /><path d="M6.500 4v6M4.500 8l2 2 2-2" stroke={BLUE} /></Glyph></Tool><Tool $w={9} aria-label="Fill list"><Chevron /></Tool></ToolRow>
            <ToolRow><Tool $w={17} aria-label="Clear"><Glyph w={13} h={12}><path d="M8 .8 12.200 5 6 11.200 1.800 7z" fill="#fff" stroke="#a349a4" /><path d="M4.500 4.300 8.700 8.500 6 11.200H4.500L1 7.800z" fill="#d8a0dc" stroke="#a349a4" /></Glyph></Tool><Tool $w={9} aria-label="Clear list"><Chevron /></Tool></ToolRow>
          </Column>
          <BigButton $w={39}>
            <IconSlot>
              <Glyph w={24} h={24}><path d="M.8 10 4.300 1l3.500 9M2 7h4.600" stroke={BLUE} /><path d="M1 13.500h6.500l-6.500 9h7" /><path d="M11 6.500h12.500v2L19 13v7l-3.500-2v-5L11 8.500z" fill="#fff" /></Glyph>
            </IconSlot>
            Sort &amp;
            <WithChevron>Filter<Chevron /></WithChevron>
          </BigButton>
          <BigButton $w={32}>
            <IconSlot><Lens s={24} /></IconSlot>
            Find &amp;
            <WithChevron>Select<Chevron /></WithChevron>
          </BigButton>
        </Group>

        <Group name="Ideas" w={46}>
          <BigButton $w={45}>
            <IconSlot><Glyph w={18} h={24}><path d="M7 1h9.500l-4 8h4.500L3.500 23l3.500-9.500H1z" fill="#7fbdf0" stroke="#2b7cc4" /></Glyph></IconSlot>
            Ideas
          </BigButton>
        </Group>

        <Group name="Sensitivity" w={59}>
          <BigButton $w={58}>
            <IconSlot>
              <Glyph w={22} h={25}><path d="M.5 2.500h10.500M16.500 12v12.500H.5v-22" stroke={BLUE} fill="#fff" /><path d="M3 10l3-3 8 8-3 3zM4.500 8.500l8 8M6 12l2-2.500" stroke={BLUE} /><path d="M11 5l2-2 8 7-2 2zM14 3l3-2.500 2 2L17 6M17 6l3-2 1.500 2" stroke={BLUE} fill="#fff" /></Glyph>
            </IconSlot>
            Sensitivity
            <WithChevron><Chevron /></WithChevron>
          </BigButton>
        </Group>
        <Collapse aria-label="Collapse ribbon"><Glyph w={7} h={5}><path d="M.5 4.200 3.500 1.200l3 3" strokeWidth="1.200" /></Glyph></Collapse>
      </Ribbon>

      <FormulaBar>
        <NameBox><input defaultValue="C24" aria-label="Name box" /><Triangle dir="down" /></NameBox>
        <Dots />
        <FxBox>
          <FxButton aria-label="Cancel"><Glyph w={9} h={9}><path d="m.7.7 7.600 7.600M8.300.7.7 8.300" stroke="#bbb" strokeWidth="1.300" /></Glyph></FxButton>
          <FxButton aria-label="Enter"><Glyph w={11} h={9}><path d="M.8 5 3.800 8l6.400-7" stroke="#bbb" strokeWidth="1.500" /></Glyph></FxButton>
          <FxButton>fx</FxButton>
        </FxBox>
        <FormulaField><input aria-label="Formula" /><Glyph w={7} h={5}><path d="M.8.8 3.500 3.500 6.200.8" stroke="#555" strokeWidth="1.600" /></Glyph></FormulaField>
      </FormulaBar>

      <SheetArea>
        <SheetView>
          <Grid>
            <colgroup>
              <col width={21} />
              {columns.map(([c, w]) => <col key={c} width={w || undefined} />)}
            </colgroup>
            <thead>
              <tr>
                <ColHead aria-label="Select all"><svg width="18" height="10" viewBox="0 0 18 10" fill="#b5b5b5"><path d="M18 1v9H9z" /></svg></ColHead>
                {columns.map(([c]) => <ColHead key={c} scope="col" $on={c === 'C'}>{c}</ColHead>)}
              </tr>
            </thead>
            <tbody>{rows.map((r) => <SheetRow key={r.n} row={r} />)}</tbody>
          </Grid>
        </SheetView>
        <VScroll>
          <ScrollButton aria-label="Scroll up"><Triangle dir="up" /></ScrollButton>
          <VThumb />
          <ScrollButton aria-label="Scroll down"><Triangle dir="down" /></ScrollButton>
        </VScroll>
      </SheetArea>

      <SheetTabs>
        <TabNav>
          <button aria-label="Previous sheets"><Triangle dir="left" color="#bbb" /></button>
          <button aria-label="Next sheets"><Triangle dir="right" color={GREEN} /></button>
        </TabNav>
        <SheetTab $w={165} $on>Using Excel Job Order Costing</SheetTab>
        <SheetTab $w={134}>Data 1 - Job Cost Totals</SheetTab>
        <SheetTab $w={169}>Data 2 - Materials Requisitions</SheetTab>
        <SheetTab $w={153}>Data 3 - Labor Time Tickets</SheetTab>
        <MoreTabs>
          D <b>...</b>
          <button aria-label="New sheet"><Glyph w={11} h={11}><circle cx="5.500" cy="5.500" r="5" stroke="#bbb" /><path d="M5.500 3v5M3 5.500h5" stroke="#bbb" /></Glyph></button>
          <Dots $tight />
        </MoreTabs>
        <HScroll>
          <ScrollButton aria-label="Scroll left"><Triangle dir="left" /></ScrollButton>
          <HThumb />
          <ScrollButton aria-label="Scroll right"><Triangle dir="right" /></ScrollButton>
        </HScroll>
      </SheetTabs>

      <StatusBar>
        <ViewButton $on aria-label="Normal view"><Glyph w={11} h={11}><path d="M.5.5h10v10H.5zM.5 4h10M.5 7h10M4 .5v10M7 .5v10" /></Glyph></ViewButton>
        <ViewButton aria-label="Page layout view"><Glyph w={11} h={11}><path d="M.5.5h10v10H.5zM2.500 2.500h6v6h-6zM4 4.500h3M4 6.500h3" /></Glyph></ViewButton>
        <ViewButton aria-label="Page break view"><Glyph w={11} h={11}><path d="M.5.5h10v10H.5zM3.500.5v6h4v-6" /></Glyph></ViewButton>
        <ZoomStep aria-label="Zoom out"><Glyph w={6} h={6}><path d="M0 3h6" /></Glyph></ZoomStep>
        <ZoomRange type="range" aria-label="Zoom" />
        <ZoomStep aria-label="Zoom in"><Glyph w={6} h={6}><path d="M0 3h6M3 0v6" /></Glyph></ZoomStep>
        <ZoomValue>100%</ZoomValue>
      </StatusBar>

      <Taskbar>
        <StartButton aria-label="Start">
          <svg width="13" height="13" viewBox="0 0 13 13" fill="#fff"><path d="M0 1.800 5.600 1v5.100H0zM6.300.9 13 0v6.100H6.300zM0 6.800h5.600V12L0 11.200zM6.300 6.800H13V13l-6.700-.9z" /></svg>
        </StartButton>
        <TaskSearch><Lens s={13} color="#222" /><input placeholder="Type here to search" aria-label="Type here to search" /></TaskSearch>
        <TaskButton aria-label="Cortana"><svg width="12" height="12" viewBox="0 0 12 12" fill="none" stroke="#fff" strokeWidth="1.600"><circle cx="6" cy="6" r="5" /></svg></TaskButton>
        <TaskButton aria-label="Task view"><svg width="13" height="11" viewBox="0 0 13 11" fill="none" stroke="#ddd"><path d="M0 .5h2M7 .5h2M0 10.500h2M7 10.500h2M.5 2.500h8v6h-8zM11.500 0v2M11.500 5v6M10.500 3.500h2" /></svg></TaskButton>
        <TaskButton aria-label="Store"><svg width="18" height="20" viewBox="0 0 18 20"><path d="M5.500 5V1.500h7V5" fill="none" stroke="#eee" strokeWidth="1.200" /><path d="M0 5h18l-1 14.500H1z" fill="#f5f5f5" /><path d="M5.500 8.500H9V12H5.500z" fill="#f25022" /><path d="M9.500 8.500H13V12H9.500z" fill="#7fba00" /><path d="M5.500 12.500H9V16H5.500z" fill="#00a4ef" /><path d="M9.500 12.500H13V16H9.500z" fill="#ffb900" /></svg></TaskButton>
        <TaskButton aria-label="File Explorer"><svg width="18" height="15" viewBox="0 0 18 15"><path d="M0 0h7l1.500 2H18v12H0z" fill="#e8a91c" /><path d="M0 3.500h18V14H0z" fill="#ffd864" /><path d="M3 15V9.500q0-1 1-1h10q1 0 1 1V15h-3v-3H6v3z" fill="#3d93d9" /></svg></TaskButton>
        <TaskButton aria-label="Edge">
          <svg width="20" height="20" viewBox="0 0 20 20"><circle cx="10" cy="10" r="9.500" fill="#1378cc" /><path d="M.5 9C1.500 3.500 5.500.5 10 .5c5.500 0 9.500 4 9.500 8 0 3-2.200 4.800-5 4.800-2.500 0-3-1-2.500-2 1-2-1-4.800-4.500-4.800C4 6.500 1.500 7.500.5 9z" fill="#35c1b5" /><path d="M13 1c4 1.200 6.500 4.300 6.500 7.500 0 3-2.200 4.800-5 4.800-2.500 0-3-1-2.500-2C13 8 15 5 13 1z" fill="#5fd35f" /><path d="M12 12.500c1.500 1.800 4.500 1.500 6.500 0-.8 3-3.500 5.500-6.500 6.500-4 0-6-3.500-5.500-6.500.3-2 1.800-3.500 3.500-3.700 1.500.7 2 1.700 2 2.500z" fill="#0c4fa0" /><path d="M10 9.500q2 0 2 3 2 2 6.500.2-2.500 2.600-6 1.600Q10 13 10 9.500z" fill="#2b2a2e" /></svg>
        </TaskButton>
        <TaskButton aria-label="Settings">
          <svg width="19" height="20" viewBox="0 0 19 20" fill="none" stroke="#eee" strokeWidth="1.300"><path d="M17.500 9.500V8l-2-.7-.7-1.700 1-2-1.500-1.300-2 1-1.500-.6L10 1H8l-.8 1.700-1.700.6-2-1L2 3.600l1 2-.6 1.700L.8 8v2l1.600.8.7 1.700-1 2L3.500 16l2-1 1.600.7L8 18.500h2" /><circle cx="9" cy="9" r="3.300" /><path d="M17.500 12.500q-4-1.500-4 .8 0 1 2 1.500t2 2q0 2-4.500.7" /></svg>
        </TaskButton>
        <TaskButton aria-label="Mail"><svg width="20" height="18" viewBox="0 0 20 18"><path d="M0 7 10 0l10 7z" fill="#0f6cbd" /><path d="M0 6.500h20V18H0z" fill="#28a8ea" /><path d="M1.500 6h17L10 13z" fill="#f4f9fd" /><path d="M0 18 10 10l10 8z" fill="#50c8f5" /></svg></TaskButton>
        <TaskButton $open aria-label="Chrome">
          <svg width="18" height="18" viewBox="0 0 18 18"><circle cx="9" cy="9" r="9" fill="#fbc116" /><path d="M9 9 1.200 4.500A9 9 0 0 1 16.800 4.500z" fill="#e33b2e" /><path d="M9 9 1.200 4.500A9 9 0 0 0 9 18l3.900-6.800z" fill="#31a350" /><path d="M9 5h7.800a9 9 0 0 0-15.600-.5L5 11z" fill="#e33b2e" /><circle cx="9" cy="9" r="4.200" fill="#fff" /><circle cx="9" cy="9" r="3.300" fill="#4285f4" /></svg>
        </TaskButton>
        <TaskButton $open aria-label="Word">
          <svg width="18" height="18" viewBox="0 0 18 18"><path d="M5 0h13v4.500H5z" fill="#41a5ee" /><path d="M5 4.500h13V9H5z" fill="#2b7cd3" /><path d="M5 9h13v4.500H5z" fill="#185abd" /><path d="M5 13.500h13V18H5z" fill="#103f91" /><rect y="4" width="10" height="10" rx="1" fill="#185abd" /><path d="m2 6.500 1.300 5L5 7l1.700 4.500L8 6.500" fill="none" stroke="#fff" strokeWidth="1.200" /></svg>
        </TaskButton>
        <TaskButton $open $active aria-label="Excel">
          <svg width="18" height="18" viewBox="0 0 18 18"><path d="M5 0h6.500v6H5z" fill="#21a366" /><path d="M11.500 0H18v6h-6.500z" fill="#33c481" /><path d="M5 6h6.500v6H5z" fill="#107c41" /><path d="M11.500 6H18v6h-6.500z" fill="#21a366" /><path d="M5 12h13v6H5z" fill="#185c37" /><rect y="4" width="10" height="10" rx="1" fill="#107c41" /><path d="m3 6.500 4 5M7 6.500l-4 5" stroke="#fff" strokeWidth="1.300" /></svg>
        </TaskButton>
        <Tray>
          <TrayButton $w={24} aria-label="Hidden icons"><svg width="10" height="6" viewBox="0 0 10 6" fill="none" stroke="#fff"><path d="M.5 5.500 5 1l4.500 4.500" /></svg></TrayButton>
          <TrayButton $w={25} aria-label="Volume"><svg width="12" height="11" viewBox="0 0 12 11" fill="none" stroke="#ddd"><path d="M.5 3.500H2L4.500 1v9L2 7.500H.5zM6.500 4q1 1.500 0 3" /><path d="M8.500 2.500q2 3 0 6M10.300 1q2.500 4.500 0 9" stroke="#999" /></svg></TrayButton>
          <TrayButton $w={28} aria-label="Battery"><svg width="13" height="11" viewBox="0 0 13 11"><path d="M3 4h9v6H3zM12 5.500h1v3h-1z" fill="#fff" /><path d="M1 1v2.500q0 1 1.500 1M3.500.5v3" stroke="#fff" fill="none" /></svg></TrayButton>
          <TrayButton $w={30} aria-label="Ink"><svg width="12" height="12" viewBox="0 0 12 12" fill="none" stroke="#ddd"><path d="M1 11q-1-4 2-4t2-2l4-4 2 1.500-5 5.500M2 11q3 1 3-2M6 8q2-2 3 0t2-1" /></svg></TrayButton>
          <TrayButton $w={30}>ENG</TrayButton>
          <Clock>{'11:41 PM\n9/29/2020'}</Clock>
          <TrayButton $w={43} aria-label="Notifications">
            <svg width="19" height="20" viewBox="0 0 19 20"><path d="M0 1h12.500v10H6l-2.500 3v-3H0z" fill="#fff" /><path d="M2 3.500h8.500M2 6h8.500M2 8.500h5" stroke="#333" /><circle cx="12.500" cy="13.500" r="5.500" fill="#2b2727" stroke="#aaa" /><path d="M11 12l1.800-1.500v6" fill="none" stroke="#fff" strokeWidth="1.200" /></svg>
          </TrayButton>
        </Tray>
      </Taskbar>
      <Toast role="status"><FnKey>Fn</FnKey>Fn Lock: On</Toast>
    </Shell>
  );
}
